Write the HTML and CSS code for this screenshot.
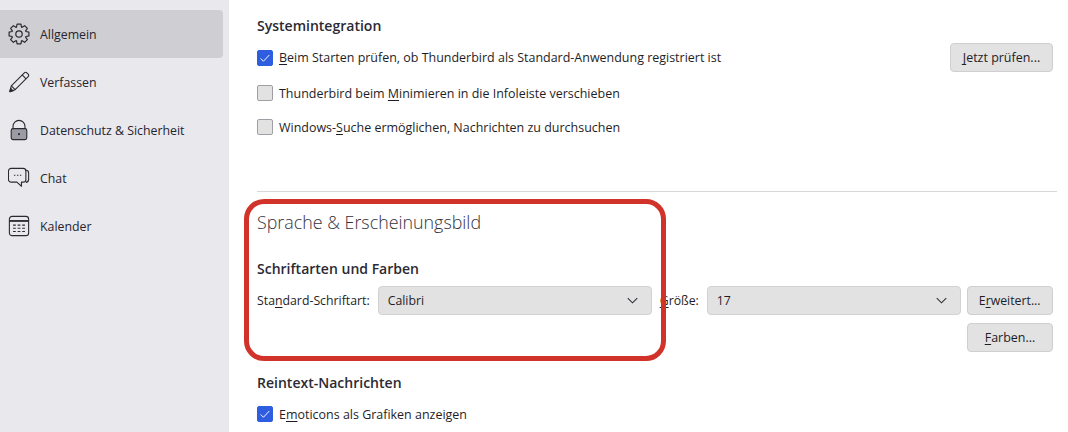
FILE: index.html
```html
<!DOCTYPE html>
<html lang="de">
<head>
<meta charset="utf-8">
<title>Einstellungen</title>
<link rel="stylesheet" href="styles.css">
</head>
<body>
<div class="app">
  <nav class="sidebar">
    <div class="nav-item active">
      <svg class="nav-icon" viewBox="0 0 24 24" fill="none" stroke="#2b2a33" stroke-width="1.3" stroke-linejoin="round"><path d="M19.5 9.300L22.800 9.900V14.100L19.500 14.700L19.250 15.380L21.120 18.150L18.150 21.120L15.380 19.250L14.700 19.500L14.100 22.800H9.900L9.300 19.500L8.620 19.250L5.850 21.120L2.880 18.150L4.750 15.380L4.500 14.700L1.200 14.100V9.900L4.500 9.300L4.750 8.620L2.880 5.850L5.850 2.880L8.620 4.750L9.300 4.500L9.900 1.200H14.100L14.700 4.500L15.380 4.750L18.150 2.880L21.120 5.850L19.250 8.620Z"/><circle cx="12" cy="12" r="3.500"/></svg>
      <span>Allgemein</span>
    </div>
    <div class="nav-item">
      <svg class="nav-icon" viewBox="0 0 24 24" fill="none" stroke="#2b2a33" stroke-width="1.2" stroke-linejoin="round"><path d="M2 22.500l1.600-6.300L17.800 2a1.900 1.900 0 0 1 2.700 0l1.500 1.500a1.900 1.900 0 0 1 0 2.700L7.800 20.400z"/><path d="M3.600 16.200l4.200 4.200M15.500 4.300l4.200 4.200"/><path d="M2 22.500l.9-3.500 2.600 2.600z" fill="#2b2a33"/></svg>
      <span>Verfassen</span>
    </div>
    <div class="nav-item">
      <svg class="nav-icon" viewBox="0 0 24 24" fill="none" stroke="#2b2a33" stroke-width="1.2"><path d="M5.500 10.500V8a6.500 6.500 0 0 1 13 0v2.500"/><rect x="3.500" y="10.500" width="17" height="12" rx="2" fill="#5b5b66" fill-opacity=".55"/><rect x="11" y="15.500" width="2" height="2" fill="#2b2a33" stroke="none"/></svg>
      <span>Datenschutz &amp; Sicherheit</span>
    </div>
    <div class="nav-item">
      <svg class="nav-icon" viewBox="0 0 24 24" fill="none" stroke="#2b2a33" stroke-width="1.2" stroke-linejoin="round"><path d="M19 3.500h.5a3 3 0 0 1 3 3v7a3.500 3.500 0 0 1-3 3.300"/><path d="M3.500 1.500h13a3 3 0 0 1 3 3v9a3 3 0 0 1-3 3h-1.800v4.500l-5-4.500H3.500a3 3 0 0 1-3-3v-9a3 3 0 0 1 3-3z"/><path d="M6.500 9h1.500M9.800 9h1.500M13 9h1.500"/></svg>
      <span>Chat</span>
    </div>
    <div class="nav-item">
      <svg class="nav-icon" viewBox="0 0 24 24" fill="none" stroke="#2b2a33" stroke-width="1.2"><rect x="1.500" y="1.500" width="21" height="21" rx="3"/><path d="M1.500 6.500h21" stroke-width="2"/><path d="M5.500 11h3M10.500 11h3M15.500 11h3M5.500 14.500h3M10.500 14.500h3M15.500 14.500h3M5.500 18h3M10.500 18h3M15.500 18h3"/></svg>
      <span>Kalender</span>
    </div>
  </nav>

  <main class="content">
    <h2 class="subhead first">Systemintegration</h2>

    <div class="row-between check-row-first">
      <label class="check"><span class="box on"><svg viewBox="0 0 16 16" fill="none" stroke="#fff" stroke-width="1.100"><path d="M3 8.500l3.200 3.200L13 4.500"/></svg></span><span><u>B</u>eim Starten prüfen, ob Thunderbird als Standard-Anwendung registriert ist</span></label>
      <button class="btn btn-check"><u>J</u>etzt prüfen...</button>
    </div>
    <label class="check check-second"><span class="box"></span><span>Thunderbird beim <u>M</u>inimieren in die Infoleiste verschieben</span></label>
    <label class="check check-third"><span class="box"></span><span>Windows-<u>S</u>uche ermöglichen, Nachrichten zu durchsuchen</span></label>

    <hr class="divider">

    <h1 class="title">Sprache &amp; Erscheinungsbild</h1>
    <h2 class="subhead fonts">Schriftarten und Farben</h2>

    <div class="font-row">
      <span class="lbl">Sta<u>n</u>dard-Schriftart:</span>
      <div class="select sel-font"><span>Calibri</span><svg class="chev" viewBox="0 0 12 7" fill="none" stroke="#2b2a33" stroke-width="1.100"><path d="M.8.800L6 6l5.200-5.200"/></svg></div>
      <span class="lbl lbl-size"><u>G</u>röße:</span>
      <div class="select sel-size"><span>17</span><svg class="chev" viewBox="0 0 12 7" fill="none" stroke="#2b2a33" stroke-width="1.100"><path d="M.8.800L6 6l5.200-5.200"/></svg></div>
      <button class="btn btn-adv">E<u>r</u>weitert...</button>
    </div>
    <div class="colors-row"><button class="btn btn-adv"><u>F</u>arben...</button></div>

    <h2 class="subhead plain">Reintext-Nachrichten</h2>
    <label class="check check-emo"><span class="box on"><svg viewBox="0 0 16 16" fill="none" stroke="#fff" stroke-width="1.100"><path d="M3 8.500l3.200 3.200L13 4.500"/></svg></span><span>E<u>m</u>oticons als Grafiken anzeigen</span></label>
  </main>
</div>
<div class="annotation"></div>
</body>
</html>
```

FILE: styles.css
```css
* { box-sizing: border-box; }
html, body { margin: 0; height: 432px; overflow: hidden; background: #fff; }
body { font-family: "Open Sans", "Noto Sans", sans-serif; font-size: 12.47px; color: #1f1e26; }
u { text-underline-offset: 2px; text-decoration-thickness: 1px; }

.app { display: flex; height: 432px; overflow: hidden; }

.sidebar { width: 229px; flex: none; background: #e9e8ed; padding: 10px 6px 0 0; font-size: 12.33px; }
.nav-item { height: 48px; display: flex; align-items: center; padding-left: 8px; gap: 10px; border-radius: 0 4px 4px 0; color: #26252d; }
.nav-item.active { background: #cfced3; }
.nav-icon { width: 22px; height: 22px; flex: none; }

.content { flex: 1; padding: 0 15px 0 28px; min-width: 0; }

h1, h2 { margin: 0; }
.subhead { font-size: 14.03px; font-weight: 600; line-height: 20px; color: #2b2a33; }
.subhead.first { padding-top: 16px; }
.subhead.fonts { padding-top: 24px; }
.subhead.plain { padding-top: 21px; }
.title { font-size: 17.85px; font-weight: 300; line-height: 26px; color: #33323a; margin-top: 17px; }

.row-between { display: flex; justify-content: space-between; align-items: center; }
.check-row-first { margin-top: 7px; height: 29px; }
.check { display: flex; align-items: center; gap: 6px; height: 20px; }
.check-second { margin-top: 11px; }
.check-third { margin-top: 14px; }
.check-emo { margin-top: 11px; }
.box { width: 16px; height: 16px; flex: none; border: 1px solid #9f9ea4; border-radius: 2px; background: #e2e2e3; }
.box.on { background: #2f5de0; border-color: #2f5de0; }
.box svg { display: block; width: 14px; height: 14px; }

.btn { font: inherit; color: #1f1e26; height: 29px; background: #e2e2e3; border: 1px solid #cfcfd1; border-radius: 4px; padding: 0; display: block; }
.btn-check { width: 103px; }
.btn-adv { width: 86px; flex: none; }

.divider { border: 0; border-top: 1px solid #d7d7d9; margin: 54px -4px 0 0; }

.font-row { display: flex; align-items: center; margin-top: 7px; height: 29px; font-size: 12.3px; }
.lbl { flex: none; }
.select { height: 29px; background: #e2e2e3; border: 1px solid #d2d2d4; border-radius: 4px; display: flex; align-items: center; justify-content: space-between; padding: 0 13px 0 9px; }
.sel-font { width: 274px; margin-left: 8px; }
.lbl-size { margin-left: 8px; width: 47px; }
.sel-size { width: 254px; margin-right: 6px; }
.chev { width: 11px; height: 7px; }
.colors-row { display: flex; justify-content: flex-end; margin-top: 8px; }

.annotation { position: absolute; left: 244px; top: 199px; width: 422px; height: 162px; border: 5px solid #d1332b; border-radius: 20px; pointer-events: none; }
```
